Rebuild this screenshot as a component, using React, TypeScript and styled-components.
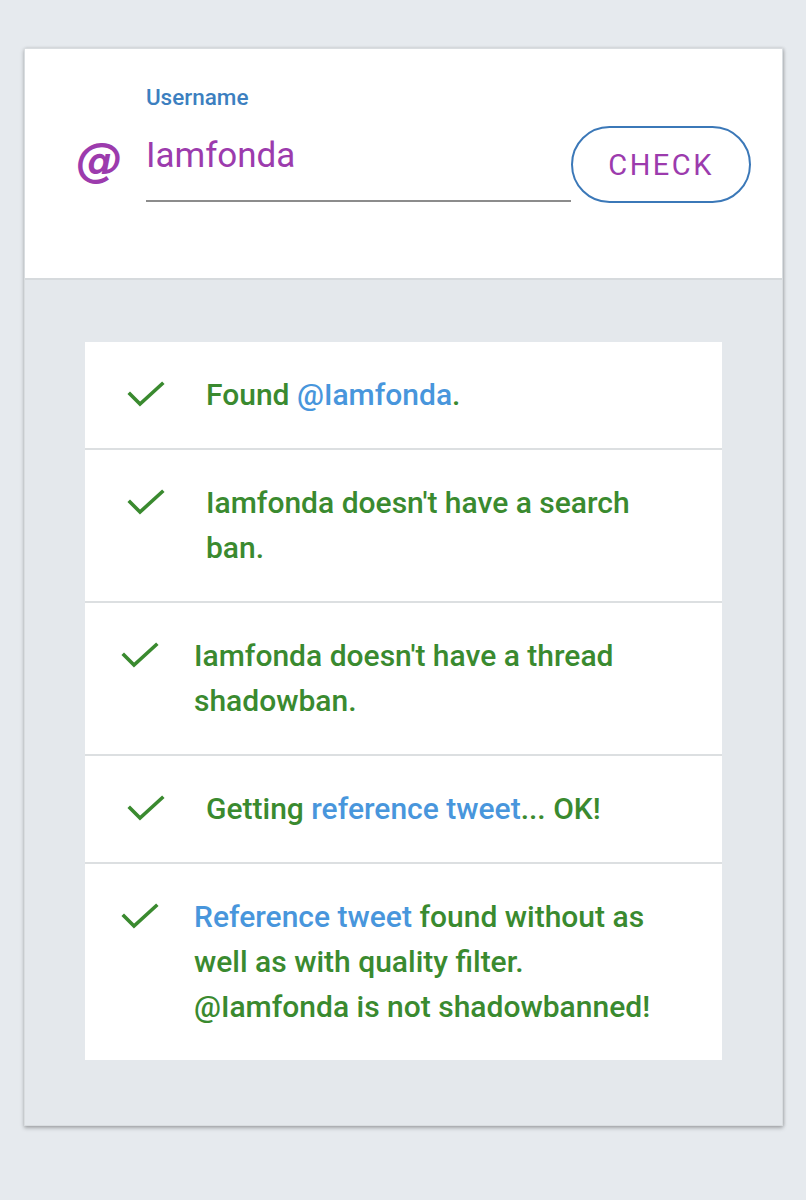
import React from "react";
import styled, { createGlobalStyle } from "styled-components";

const GREEN = "#3a8a2f";
const BLUE = "#4896dc";
const PURPLE = "#9c3bad";

const Global = createGlobalStyle`
  html, body { margin: 0; padding: 0; background: #e6eaee; }
  body { font-family: Roboto, "Noto Sans", sans-serif; }
`;

const Page = styled.div`
  padding: 48px 23px 74px 24px;
`;

const Card = styled.div`
  width: 759px;
  height: 1078px;
  background: #e4e8ec;
  border: 1px solid #d9dde0;
  box-sizing: border-box;
  box-shadow: 0 2px 4px rgba(0,0,0,0.28), 1px 0 3px rgba(0,0,0,0.12);
  display: flex;
  flex-direction: column;
`;

const Header = styled.div`
  height: 231px;
  box-sizing: border-box;
  background: #ffffff;
  border-bottom: 2px solid #d6dadd;
  display: flex;
  align-items: flex-start;
  padding: 0 31px 0 51px;
`;

const AtSign = styled.div`
  width: 70px;
  margin-top: 84px;
  font-family: "DejaVu Sans", sans-serif;
  font-weight: 700;
  font-style: italic;
  font-size: 47px;
  line-height: 54px;
  color: ${PURPLE};
`;

const Field = styled.div`
  width: 426px;
  display: flex;
  flex-direction: column;
  margin-top: 35px;
`;

const Label = styled.div`
  font-size: 22.5px;
  font-weight: 500;
  color: #3c7fc0;
  line-height: 26px;
`;

const Value = styled.div`
  margin-top: 26px;
  font-size: 35px;
  line-height: 40px;
  color: ${PURPLE};
  padding-bottom: 24px;
  border-bottom: 2px solid #8c8c8c;
`;

const CheckButton = styled.button`
  margin-top: 77px;
  width: 180px;
  height: 77px;
  border: 2px solid #3b78b8;
  border-radius: 39px;
  background: #fff;
  color: ${PURPLE};
  font-family: Roboto, sans-serif;
  font-size: 29px;
  letter-spacing: 2.5px;
  padding: 0;
  cursor: pointer;
`;

const Body = styled.div`
  padding: 62px 60px 0 60px;
`;

const List = styled.div`
  background: #fff;
  display: flex;
  flex-direction: column;
`;

const Row = styled.div<{ $tight?: boolean; $last?: boolean }>`
  display: flex;
  align-items: flex-start;
  padding: 30px 51px 31px ${(p) => (p.$tight ? 36 : 42)}px;
  border-bottom: ${(p) => (p.$last ? "none" : "2px solid #dcdfe1")};
`;

const IconBox = styled.div<{ $tight?: boolean }>`
  width: 38px;
  height: 45px;
  flex: none;
  display: flex;
  align-items: center;
  margin-right: ${(p) => (p.$tight ? 35 : 41)}px;
`;

const Text = styled.div`
  font-size: 30px;
  font-weight: 500;
  line-height: 45px;
  color: ${GREEN};
`;

const Link = styled.span`
  color: ${BLUE};
`;

const Check = () => (
  <svg width="38" height="28" viewBox="0 0 38 28">
    <polyline
      points="3,13 13,23 35,3"
      fill="none"
      stroke={GREEN}
      strokeWidth="3.6"
      strokeLinecap="square"
    />
  </svg>
);

const Item = ({ tight, last, children }: { tight?: boolean; last?: boolean; children: React.ReactNode }) => (
  <Row $tight={tight} $last={last}>
    <IconBox $tight={tight}>
      <Check />
    </IconBox>
    <Text>{children}</Text>
  </Row>
);

export default function App() {
  return (
    <>
      <Global />
      <Page>
        <Card>
          <Header>
            <AtSign>@</AtSign>
            <Field>
              <Label>Username</Label>
              <Value>Iamfonda</Value>
            </Field>
            <CheckButton>CHECK</CheckButton>
          </Header>
          <Body>
            <List>
              <Item>
                Found <Link>@Iamfonda</Link>.
              </Item>
              <Item>Iamfonda doesn't have a search ban.</Item>
              <Item tight>Iamfonda doesn't have a thread shadowban.</Item>
              <Item>
                Getting <Link>reference tweet</Link>... OK!
              </Item>
              <Item tight last>
                <Link>Reference tweet</Link> found without as well as with quality filter. @Iamfonda is not shadowbanned!
              </Item>
            </List>
          </Body>
        </Card>
      </Page>
    </>
  );
}
